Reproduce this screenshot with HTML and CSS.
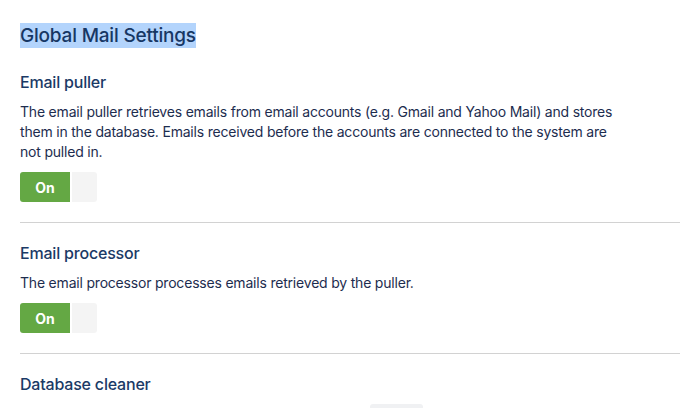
FILE: index.html
```html
<!DOCTYPE html>
<html>
<head>
<meta charset="utf-8">
<link rel="stylesheet" href="styles.css">
</head>
<body>
<div class="page">
  <h1 class="title"><span class="selected">Global Mail Settings</span></h1>

  <section class="setting">
    <h2 class="setting-title">Email puller</h2>
    <p class="setting-desc">The email puller retrieves emails from email accounts (e.g. Gmail and Yahoo Mail) and stores them in the database. Emails received before the accounts are connected to the system are not pulled in.</p>
    <div class="toggle"><span class="toggle-on">On</span><span class="toggle-off"></span></div>
  </section>

  <section class="setting">
    <h2 class="setting-title">Email processor</h2>
    <p class="setting-desc">The email processor processes emails retrieved by the puller.</p>
    <div class="toggle"><span class="toggle-on">On</span><span class="toggle-off"></span></div>
  </section>

  <section class="setting last">
    <h2 class="setting-title">Database cleaner</h2>
    <div class="cleaner-row"><span class="cleaner-box"></span></div>
  </section>
</div>
</body>
</html>
```

FILE: styles.css
```css
html, body {
  margin: 0;
  padding: 0;
  background: #ffffff;
  overflow: hidden;
}

body {
  font-family: Inter, "Liberation Sans", sans-serif;
  color: #1d2d4f;
}

.page {
  padding: 23px 0 0 20px;
}

.title {
  margin: 0;
  font-size: 19px;
  line-height: 25px;
  height: 25px;
  font-weight: 500;
  color: #173764;
  letter-spacing: -0.2px;
}

.selected {
  display: inline-block;
  line-height: 25px;
  background: #b3d4fc;
}

.setting {
  padding: 20px 0 20px 0;
  border-bottom: 1px solid #d2d2d2;
}

.setting:first-of-type {
  padding-top: 24px;
}

.setting.last {
  border-bottom: none;
}

.setting-title {
  margin: 0;
  font-size: 16px;
  line-height: 20px;
  font-weight: 500;
  color: #1b3a66;
  letter-spacing: -0.2px;
}

.setting-desc {
  margin: 10px 0 0 0;
  max-width: 603px;
  font-size: 14px;
  line-height: 20px;
  color: #1d2d4f;
  letter-spacing: -0.2px;
}

.toggle {
  display: flex;
  gap: 2px;
  margin-top: 10px;
  height: 30px;
}

.toggle-on {
  width: 50px;
  background: #64a844;
  color: #ffffff;
  font-size: 14px;
  font-weight: 700;
  display: flex;
  align-items: center;
  justify-content: center;
  border-radius: 3px 0 0 3px;
}

.toggle-off {
  width: 25px;
  background: #f4f4f4;
  border-radius: 0 3px 3px 0;
}

.cleaner-row {
  padding: 10px 0 0 350px;
}

.cleaner-box {
  display: block;
  width: 53px;
  height: 20px;
  background: #f0f1f3;
  border-radius: 3px;
}
```
